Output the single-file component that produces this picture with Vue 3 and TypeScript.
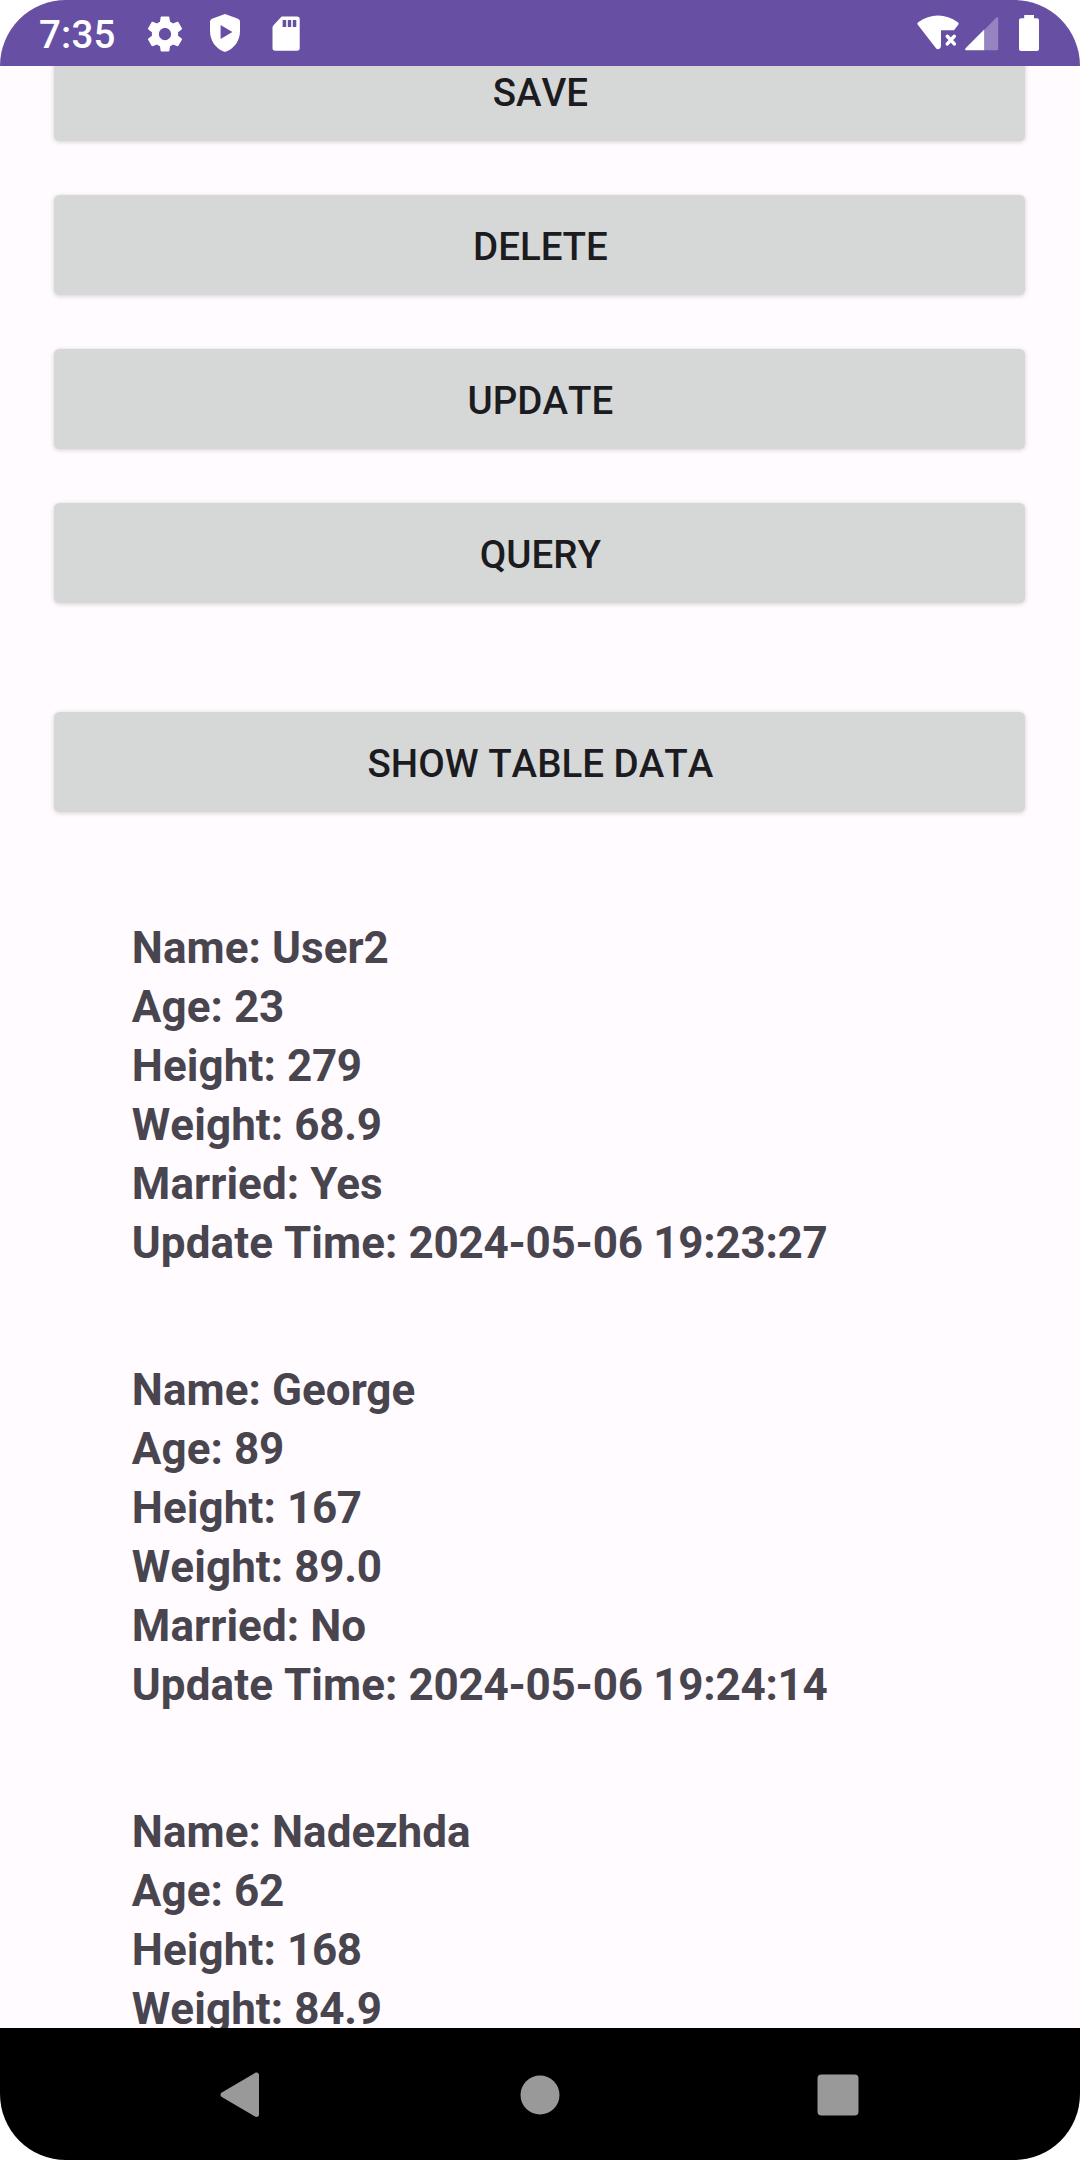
<script setup lang="ts">
interface Field {
  label: string
  value: string
}

const actions: string[] = ['Save', 'Delete', 'Update', 'Query']

const users: Field[][] = [
  [
    { label: 'Name', value: 'User2' },
    { label: 'Age', value: '23' },
    { label: 'Height', value: '279' },
    { label: 'Weight', value: '68.9' },
    { label: 'Married', value: 'Yes' },
    { label: 'Update Time', value: '2024-05-06 19:23:27' },
  ],
  [
    { label: 'Name', value: 'George' },
    { label: 'Age', value: '89' },
    { label: 'Height', value: '167' },
    { label: 'Weight', value: '89.0' },
    { label: 'Married', value: 'No' },
    { label: 'Update Time', value: '2024-05-06 19:24:14' },
  ],
  [
    { label: 'Name', value: 'Nadezhda' },
    { label: 'Age', value: '62' },
    { label: 'Height', value: '168' },
    { label: 'Weight', value: '84.9' },
  ],
]

const isNumeric = (value: string): boolean => /^\d/.test(value)
</script>

<template>
  <div class="device">
    <header class="status">
      <span class="clock">7:35</span>
      <svg class="gear" width="42" height="42" viewBox="0 0 24 24">
        <path fill="#fff" d="M19.43 12.98c.04-.32.07-.64.07-.98s-.03-.66-.07-.98l2.11-1.65c.19-.15.24-.42.12-.64l-2-3.46c-.12-.22-.39-.3-.61-.22l-2.49 1c-.52-.4-1.08-.73-1.69-.98l-.38-2.65C14.46 2.18 14.25 2 14 2h-4c-.25 0-.46.18-.49.42l-.38 2.65c-.61.25-1.17.59-1.69.98l-2.49-1c-.23-.09-.49 0-.61.22l-2 3.46c-.13.22-.07.49.12.64l2.11 1.65c-.04.32-.07.65-.07.98s.03.66.07.98l-2.11 1.65c-.19.15-.24.42-.12.64l2 3.46c.12.22.39.3.61.22l2.49-1c.52.4 1.08.73 1.69.98l.38 2.65c.03.24.24.42.49.42h4c.25 0 .46-.18.49-.42l.38-2.65c.61-.25 1.17-.59 1.69-.98l2.49 1c.23.09.49 0 .61-.22l2-3.46c.12-.22.07-.49-.12-.64l-2.11-1.65zM12 15.5c-1.93 0-3.5-1.57-3.5-3.5s1.57-3.5 3.5-3.5 3.5 1.57 3.5 3.5-1.57 3.5-3.5 3.5z" />
      </svg>
      <svg class="shield" width="32" height="40" viewBox="0 0 32 40">
        <path fill="#fff" fill-rule="evenodd" d="M14.6 1.4Q16 .8 17.4 1.4L29 5.7Q31 6.5 31 8.6V18C31 28 25 35.5 17.3 38.6Q16 39.1 14.7 38.6C7 35.5 1 28 1 18V8.6Q1 6.5 3 5.7ZM11.6 12V26L23.4 19Z" />
      </svg>
      <svg class="sd" width="28" height="36" viewBox="0 0 28 36">
        <path fill="#fff" fill-rule="evenodd" d="M10.3 .5H25Q27.7 .5 27.7 3.2V32Q27.7 34.7 25 34.7H3.2Q.5 34.7 .5 32V11.5Q.5 10.3 1.3 9.5L8.7 1.4Q9.4 .5 10.3 .5ZM10.6 4V11H14.2V4ZM15.8 4V11H19.2V4ZM20.8 4V11H24.3V4Z" />
      </svg>
      <span class="grow"></span>
      <svg class="wifi" width="42" height="36" viewBox="0 0 42 36">
        <path fill="#fff" d="M.8 9.8Q-.2 8.3 1.2 7.3C13.5-1.6 28.5-1.6 40.8 7.3Q42.2 8.3 41.2 9.8L37 15.2H24V30.5Q24 32.5 22.9 33.4Q21 35 19.2 33.4Z" />
        <path stroke="#fff" stroke-width="3.5" stroke-linecap="round" d="M30.3 21.3L37.3 28.9M37.3 21.3L30.3 28.9" />
      </svg>
      <svg class="signal" width="34" height="34" viewBox="0 0 34 34">
        <path fill="#fff" fill-opacity=".3" d="M19.2 12.9L30.9 .9Q31.5 .3 32.2 .3Q33.2 .3 33.2 1.5V32Q33.2 33.2 32 33.2H19.2Z" />
        <path fill="#fff" d="M19.2 12.5V33.2H1.3Q.1 33.2 .1 32.2Q.1 31.5 .8 30.9Z" />
      </svg>
      <svg class="battery" width="20" height="37" viewBox="0 0 20 37">
        <path fill="#fff" d="M5.2 0H15V3.2H18Q20 3.2 20 5.2V34Q20 36 18 36H2Q0 36 0 34V5.2Q0 3.2 2 3.2H5.2Z" />
      </svg>
    </header>

    <main class="content">
      <div class="actions">
        <button v-for="a in actions" :key="a" class="btn" type="button">{{ a }}</button>
      </div>
      <button class="btn show" type="button">Show table data</button>
      <section class="list">
        <div v-for="(user, i) in users" :key="i" class="record">
          <div v-for="f in user" :key="f.label" class="line">
            <span class="label">{{ f.label }}: </span><span :class="{ numeric: isNumeric(f.value) }">{{ f.value }}</span>
          </div>
        </div>
      </section>
    </main>

    <nav class="navbar">
      <svg width="40" height="46" viewBox="0 0 40 46">
        <path fill="#999" d="M1.8 20.6L35 .9C37-.2 39 .8 39 3V42.5C39 44.7 37 45.7 35 44.6L1.8 25C.1 24 .1 21.6 1.8 20.6Z" />
      </svg>
      <svg class="home" width="40" height="40" viewBox="0 0 40 40">
        <circle cx="20" cy="20" r="19.5" fill="#999" />
      </svg>
      <svg width="42" height="42" viewBox="0 0 42 42">
        <rect x=".5" y=".5" width="41" height="41" rx="4" fill="#999" />
      </svg>
    </nav>
  </div>
</template>

<style>
body {
  margin: 0;
  background: #fff;
}
</style>

<style scoped>
.device {
  box-sizing: border-box;
  display: flex;
  flex-direction: column;
  width: 1080px;
  height: 2160px;
  overflow: hidden;
  border-radius: 66px;
  background: #fffbff;
  font-family: Roboto, "Noto Sans", sans-serif;
}

.status {
  display: flex;
  flex: none;
  align-items: flex-start;
  box-sizing: border-box;
  height: 66px;
  padding: 0 41px 0 39px;
  background: #6750a4;
  color: #fff;
}

.clock {
  width: 104.5px;
  margin-top: 12px;
  font-size: 38.5px;
  font-weight: 500;
  letter-spacing: 0.2px;
  line-height: 46px;
  white-space: nowrap;
}

.gear {
  margin-top: 12.5px;
}

.shield {
  margin: 13px 0 0 23.5px;
}

.sd {
  margin: 15.5px 0 0 30.5px;
}

.grow {
  flex: 1;
}

.wifi {
  margin-top: 15px;
}

.signal {
  margin: 17px 0 0 6px;
}

.battery {
  margin: 15px 0 0 20px;
}

.content {
  flex: 1;
  min-height: 0;
  overflow: hidden;
  padding: 0 54.6px 0 54.4px;
}

.actions {
  display: flex;
  flex-direction: column;
  gap: 54px;
  margin-top: -25px;
}

.btn {
  display: block;
  width: 100%;
  height: 100px;
  padding: 2px 0 0 1px;
  border: 0;
  border-radius: 5.5px;
  background: #d6d8d7;
  box-shadow: 0 1px 5px rgba(0, 0, 0, 0.18);
  color: #1c1b1f;
  font-family: inherit;
  font-size: 38.5px;
  font-kerning: none;
  font-weight: 500;
  text-transform: uppercase;
}

.show {
  margin-top: 109px;
}

.list {
  display: flex;
  flex-direction: column;
  gap: 88px;
  padding: 107px 0 0 77.4px;
}

.line {
  height: 59px;
  color: #49454f;
  font-size: 44px;
  font-weight: 700;
  line-height: 59px;
  white-space: nowrap;
}

.label {
  font-kerning: none;
  letter-spacing: 0.08px;
  white-space: pre;
}

.numeric {
  letter-spacing: -0.26px;
}

.navbar {
  display: flex;
  flex: none;
  align-items: center;
  justify-content: space-between;
  box-sizing: border-box;
  height: 132px;
  padding: 1px 221px 0 220px;
  background: #000;
}

.home {
  margin-left: 3px;
}
</style>
